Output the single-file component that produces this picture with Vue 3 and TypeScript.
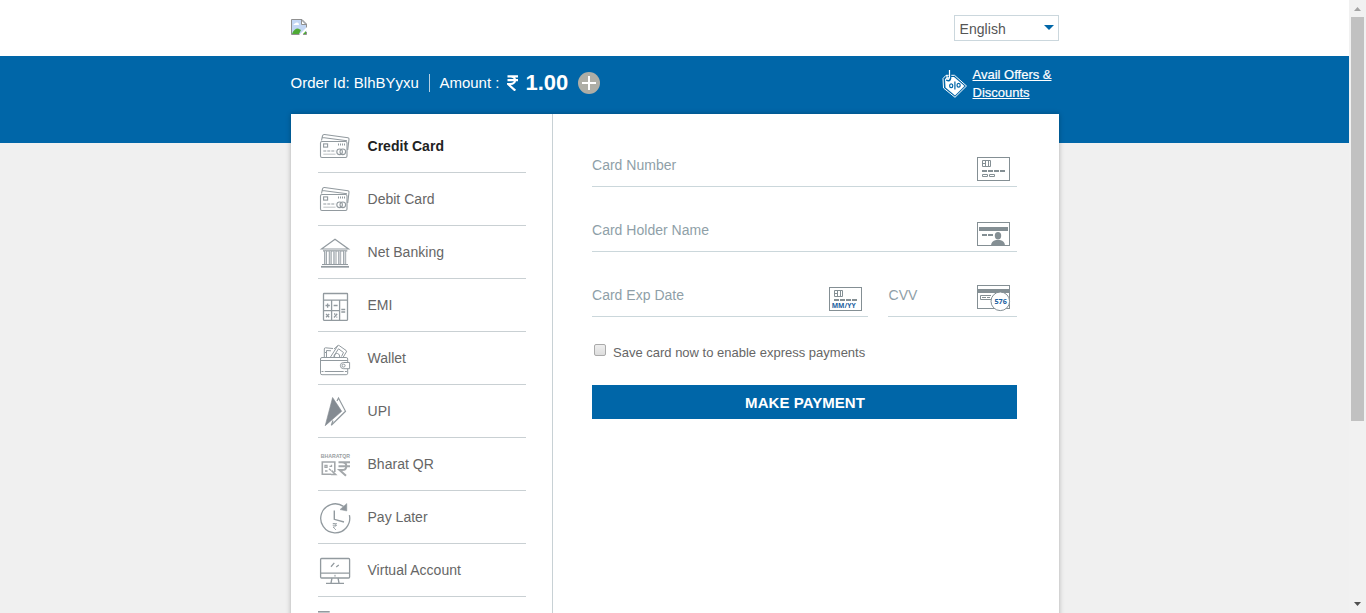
<script setup lang="ts">
import { ref } from 'vue'

interface Method {
  id: string
  label: string
}

const methods: Method[] = [
  { id: 'credit', label: 'Credit Card' },
  { id: 'debit', label: 'Debit Card' },
  { id: 'bank', label: 'Net Banking' },
  { id: 'emi', label: 'EMI' },
  { id: 'wallet', label: 'Wallet' },
  { id: 'upi', label: 'UPI' },
  { id: 'qr', label: 'Bharat QR' },
  { id: 'later', label: 'Pay Later' },
  { id: 'virtual', label: 'Virtual Account' },
  { id: 'more', label: '' },
]
const active = ref<string>('credit')
const saved = ref<boolean>(false)
</script>

<template>
  <div class="window">
    <div class="page">
      <header class="top">
        <div class="wrap top-row">
          <svg class="logo" width="16" height="16" viewBox="0 0 16 16">
            <path d="M.5 .5H11L15.5 5V15.5H.5Z" fill="#c3d7f5" />
            <path d="M1 15Q3 9.5 7 9.5L10 11 8 15Z" fill="#4faa35" />
            <path d="M2.5 6q0-1.5 1.5-1.5 1-1.5 2.5-1 1.5.3 1.5 2.5z" fill="#fff" />
            <path d="M.5 15.5V.5H11L15.5 5V9M.5 15.5H9M12 15.5H15.5V13" fill="none" stroke="#909090" />
            <path d="M10.5 1V5.5H15Z" fill="#fff" stroke="#909090" />
            <path d="M8 16L16 8V11L11.5 16Z" fill="#fff" />
            <path d="M12 15L15 12V15Z" fill="#4faa35" />
          </svg>
          <div class="lang">
            <span>English</span>
            <svg width="10" height="5" viewBox="0 0 10 5"><path d="M0 0H10L5 5Z" fill="#0066a8" /></svg>
          </div>
        </div>
      </header>

      <section class="band">
        <div class="wrap order">
          <span class="order-id">Order Id: BlhBYyxu</span>
          <span class="sep"></span>
          <span class="amount-label">Amount :</span>
          <svg class="rupee" width="12" height="16" viewBox="0 0 12 16">
            <path d="M.5 1.3H11M.5 5.2H11M1 1.3H3.5C9.5 1.3 9.5 9 3.5 9H1L8.3 15.6" fill="none" stroke="#fff" stroke-width="2.2" />
          </svg>
          <strong class="amount">1.00</strong>
          <svg class="plus" width="22" height="22" viewBox="0 0 22 22">
            <circle cx="11" cy="11" r="11" fill="#aeaea6" />
            <path d="M11 4V18M4 11H18" stroke="#fff" stroke-width="2" />
          </svg>
          <a class="offers">
            <svg width="26" height="30" viewBox="0 0 26 30">
              <path d="M1 9.5L4 6.3 12.5 6.3 24.5 17 13 28.3 1.5 19Z" fill="none" stroke="#fff" stroke-width="1" />
              <path d="M3 10L6 8 12 8 22.5 17 13 26.5 3.5 18.5Z" fill="#fff" />
              <path d="M4.5 10.5Q7.5 12.5 8 9.5V3" fill="none" stroke="#0066a8" stroke-width="2.6" />
              <path d="M7.5 1V8.5Q7 11 5 10V6" fill="none" stroke="#fff" stroke-width="1.2" />
              <g fill="none" stroke="#0066a8" stroke-width="1.2">
                <ellipse cx="9.2" cy="16.7" rx="1.6" ry="1.9" />
                <ellipse cx="16.6" cy="16.3" rx="1.6" ry="1.9" />
                <path d="M12.9 12.5V20.5" />
              </g>
            </svg>
            <span>Avail Offers &amp;<br />Discounts</span>
          </a>
        </div>
      </section>

      <main class="wrap card">
        <nav class="menu">
          <div
            v-for="m in methods"
            :key="m.id"
            class="item"
            :class="{ active: active === m.id }"
            @click="active = m.id"
          >
            <svg class="ico" width="34" height="52" viewBox="0 0 34 52">
              <g v-if="m.id === 'credit' || m.id === 'debit'" stroke-width="1.1">
                <path d="M3.5 20.5L4.5 15.8Q5 14.3 6.5 14.5L30 17.7Q31.2 18 31 19.3L29.7 30M4.5 17.5L29 20.8" />
                <rect x="2.5" y="21.5" width="26.5" height="16" rx="1.5" fill="#fff" />
                <rect x="5.6" y="23.9" width="4" height="3.2" />
                <path d="M20 24.5H27.3" stroke-width="2" stroke-dasharray="1 1" />
                <path d="M5.3 31H17.5" stroke-width="1.1" stroke-dasharray="3 1" />
                <path d="M5.3 34.2H17.5" opacity=".55" />
                <circle cx="21.6" cy="31.8" r="2.8" /><circle cx="24.8" cy="31.8" r="2.8" />
              </g>
              <g v-else-if="m.id === 'bank'">
                <path d="M3.5 23L17 13.3 30.5 23ZM5 24.8H29.3" stroke-width="1.2" />
                <path d="M7.5 25V38M12 25V38M16.5 25V38M21.3 25V38M26.5 25V38" stroke="#d5d8db" stroke-width="2.2" />
                <path d="M6.5 25V38M8.5 25V38M11.3 25V38M13.3 25V38M15.9 25V38M18.1 25V38M20.7 25V38M22.7 25V38M25.5 25V38M27.7 25V38" stroke-width=".8" />
                <path d="M4 38.5H30" />
                <path d="M3 40.8H31" stroke-width="1.7" />
              </g>
              <g v-else-if="m.id === 'emi'" stroke-width="1.3">
                <rect x="5.5" y="14.5" width="24" height="26.8" rx=".5" />
                <path d="M5.5 21.2H29.5M13.6 21.2V41.3M21.6 21.2V41.3M5.5 31.6H21.6" />
                <path d="M9.6 24.5V28.7M7.5 26.5H11.8M15.6 26.5H19.6M23.3 30.5H27.2M23.3 33H27.2M8 35L11.2 38.2M8 38.2L11.2 35M16 38.5L19.2 34.8M16 35H17.3M18.3 38.2H19.3" />
              </g>
              <g v-else-if="m.id === 'wallet'">
                <path d="M6.3 25V17Q6.3 15.8 7.5 15.8L15 16.5M8.5 25V18.5L13 18.8M7 21L9 19M12.5 25L19.7 13.8Q20.3 13 21.2 13.6L28 18.4Q29 19 28.3 20L25.3 25M15.5 24.5L20.5 16.8 25.5 20.5 23.5 24.5M16 17L20 13.5" />
                <path d="M16.5 25Q16.5 20.6 19.5 21.5 22 22 21.7 25" />
                <rect x="2.5" y="25.5" width="27.2" height="17.2" rx="1.5" />
                <path d="M2.8 28.5H29.5" />
                <path d="M3.5 39.5H29" stroke-dasharray="2 1.2 19 1.2" />
                <path d="M31.6 30.5H25.7Q22.4 30.5 22.4 33.6 22.4 36.7 25.7 36.7H31.6Z" fill="#fff" />
                <circle cx="25.6" cy="33.6" r="1.5" />
              </g>
              <g v-else-if="m.id === 'upi'">
                <path d="M19 16L20.5 13 27.5 26.3 13.3 40.3 15 35.5" stroke-width="1.2" />
                <path d="M14.6 12.5L23.7 26.3 7.2 40.7Z" fill="#848b92" stroke="#848b92" stroke-width=".6" />
              </g>
              <g v-else-if="m.id === 'qr'" class="soft">
                <text x="2.8" y="20.4" textLength="29.2" lengthAdjust="spacingAndGlyphs">BHARATQR</text>
                <path d="M16.8 34V24H4.3V36.2H13" stroke-width="1.6" />
                <path d="M7 27.3H9V29.3H7ZM11.5 28.3H13.5V26.8M7 33H9.5M11 30.8L13 32.5" stroke-width="1.3" />
                <path d="M13 36.5H17.5L13.5 32.5" stroke-width="1.7" />
                <path d="M20.5 24.3H32M20.5 28.3H32M21 24.3H24C29.8 24.3 29.8 32 24 32H21.5L28 37.8" stroke-width="2" />
              </g>
              <g v-else-if="m.id === 'later'">
                <path d="M31.4 24.2A14.5 14.5 0 1 1 25.5 15.4" stroke-width="1.3" />
                <path d="M22 18.6L28.8 12.5V20Z" fill="#8f969c" stroke-width=".5" />
                <path d="M16.3 19.5V28.3L26 31" stroke-width="1.4" />
                <path d="M14.7 32.6H19M14.7 34.3H19M15 32.6H16C18.4 32.6 18.4 36 16 36H15L18 39" stroke-width=".8" />
              </g>
              <g v-else-if="m.id === 'virtual'" stroke-width="1.3">
                <rect x="2.6" y="14.5" width="29" height="19.5" rx="1" />
                <path d="M2.6 29.2H31.6M13 22.7L16.3 18.9M18.2 23L20.8 21M14 34L13 39M20 34L21 39M8 39.3H26" />
                <circle cx="17" cy="31.7" r=".2" />
              </g>
              <path v-else d="M0 14.8H11.7" stroke-width="1.6" />
            </svg>
            <span>{{ m.label }}</span>
          </div>
        </nav>

        <form class="form" @submit.prevent>
          <div class="field">
            <span>Card Number</span>
            <svg class="fico" width="33" height="25" viewBox="0 0 33 25">
              <rect x=".5" y=".5" width="32" height="23" />
              <path d="M5.5 3.5H13.5V9.5H5.5ZM8.5 3.5V9.5M11.5 3.5V9.5M5.5 6.5H8.5" />
              <path d="M5 14H28" stroke-width="2" stroke-dasharray="5 1" />
              <path d="M5.5 17.5H10.5V19.5H5.5ZM12.5 17.5H17.5V19.5H12.5Z" />
            </svg>
          </div>
          <div class="field">
            <span>Card Holder Name</span>
            <svg class="fico" width="33" height="25" viewBox="0 0 33 25">
              <rect x=".5" y=".5" width="32" height="23" />
              <path d="M2 7H31" stroke-width="4" />
              <path d="M5 13H16" stroke-width="2" stroke-dasharray="5 1" />
              <path d="M14 24Q14 19 19 18H23Q28 19 28 24Z" fill="#848f94" stroke="none" />
              <ellipse cx="21" cy="13.7" rx="3.2" ry="3.7" fill="#848f94" stroke="none" />
            </svg>
          </div>
          <div class="pair">
            <div class="field exp">
              <span>Card Exp Date</span>
              <svg class="fico" width="33" height="25" viewBox="0 0 33 25">
                <rect x=".5" y=".5" width="32" height="23" />
                <path d="M5.5 3.5H13.5V9.5H5.5ZM8.5 3.5V9.5M11.5 3.5V9.5M5.5 6.5H8.5" />
                <path d="M5 13H28" stroke-width="2" stroke-dasharray="5 1" />
                <text x="2.7" y="21.4" font-size="7.6" textLength="24" lengthAdjust="spacingAndGlyphs">MM/YY</text>
              </svg>
            </div>
            <div class="field cvv">
              <span>CVV</span>
              <svg class="fico" width="33" height="27" viewBox="0 0 33 27">
                <rect x=".5" y=".5" width="32" height="23" />
                <path d="M0 6H33" stroke-width="4" />
                <path d="M14 10.5H3.5V14.5H14" />
                <path d="M5 12.5H13" stroke-dasharray="4 1" />
                <circle cx="23.3" cy="16.3" r="9.3" fill="#fff" />
                <text x="17.4" y="18.8" font-size="7.4" textLength="12.4" lengthAdjust="spacingAndGlyphs">576</text>
              </svg>
            </div>
          </div>
          <div class="save" @click="saved = !saved">
            <i class="box"></i>
            <span>Save card now to enable express payments</span>
          </div>
          <button class="pay" type="submit">MAKE PAYMENT</button>
        </form>
      </main>
    </div>

    <aside class="bar">
      <svg width="17" height="17" viewBox="0 0 17 17"><path d="M5 11H12L8.5 7Z" fill="#a3a3a3" /></svg>
      <div class="thumb"></div>
      <svg class="down" width="17" height="17" viewBox="0 0 17 17"><path d="M5 6H12L8.5 10Z" fill="#505050" /></svg>
    </aside>
  </div>
</template>

<style>
html,
body {
  margin: 0;
  overflow: hidden;
}
</style>

<style scoped>
.window {
  display: flex;
  width: 1366px;
  height: 613px;
  overflow: hidden;
  font-family: "Liberation Sans", Arial, sans-serif;
  font-size: 14px;
  color: #666;
}
.window * {
  box-sizing: border-box;
}
svg {
  display: block;
  flex: none;
}
span,
strong {
  white-space: nowrap;
}
.page {
  width: 1349px;
  height: 613px;
  overflow: hidden;
  background: #f0f0f0;
}
.wrap {
  width: 768px;
  margin-left: 291px;
}
.top {
  height: 56px;
  background: #fff;
}
.top-row {
  display: flex;
  justify-content: space-between;
  padding-top: 15px;
}
.logo {
  margin-top: 4px;
}
.lang {
  display: flex;
  align-items: center;
  justify-content: space-between;
  width: 105px;
  height: 26px;
  padding: 0 5px 0 4.5px;
  border: 1px solid #cbd7dd;
  font-size: 14px;
  letter-spacing: 0.05px;
  color: #555;
}
.lang span {
  padding-top: 2px;
}
.lang svg {
  margin-top: -2px;
  margin-right: -1px;
}
.band {
  height: 87px;
  background: #0066a8;
}
.order {
  display: flex;
  align-items: center;
  height: 54px;
  color: #fff;
  font-size: 15px;
}
.order-id {
  margin: -2px 0 0 -0.5px;
}
.amount-label {
  margin: -2px 0 0 -0.5px;
}
.sep {
  width: 1px;
  height: 18px;
  margin: 0 10px;
  background: #b5d0e3;
}
.rupee {
  margin-left: 8px;
}
.amount {
  margin-left: 6px;
  font-size: 22px;
}
.plus {
  margin-left: 10px;
}
.offers {
  display: flex;
  align-items: center;
  width: 118px;
  margin-left: auto;
  padding-top: 2px;
  font-size: 13px;
  line-height: 18px;
  text-decoration: underline;
}
.offers span {
  -webkit-text-stroke: 0.2px #fff;
}
.offers svg {
  margin-left: 1px;
  margin-right: 4.5px;
}
.card {
  display: flex;
  position: relative;
  height: 520px;
  margin-top: -29px;
  background: #fff;
  box-shadow: 0 0 5px rgba(0, 0, 0, 0.28);
}
.menu {
  width: 262px;
  padding: 6px 26px 0 27px;
  border-right: 1px solid #c8d1d5;
}
.item {
  display: flex;
  align-items: center;
  height: 53px;
  border-bottom: 1px solid #c9d0d3;
}
.item span {
  margin-left: 15.5px;
  font-size: 14px;
  letter-spacing: 0.02px;
}
.item.active span {
  font-weight: bold;
  color: #222;
}
.ico {
  fill: none;
  stroke: #929a9f;
}
.soft {
  stroke: #a3a7aa;
}
.ico text {
  fill: #999ea2;
  stroke: none;
  font-size: 5.2px;
  font-weight: bold;
}
.form {
  width: 425px;
  margin: 22px 0 0 39px;
}
.field {
  display: flex;
  justify-content: space-between;
  height: 51px;
  margin-bottom: 14px;
  padding: 20px 7px 0 0;
  border-bottom: 1px solid #cbd7db;
  color: #8f9fa8;
}
.field span {
  line-height: 18px;
  letter-spacing: 0.02px;
}
.fico {
  margin-top: 1px;
  fill: none;
  stroke: #848f94;
  overflow: visible;
}
.fico text {
  fill: #2060a0;
  stroke: none;
  font-family: "Open Sans", sans-serif;
  font-weight: bold;
}
.pair {
  display: flex;
  gap: 20px;
}
.exp {
  width: 276px;
  padding-right: 6px;
}
.cvv {
  width: 129px;
}
.cvv span {
  padding-left: 0.5px;
}
.cvv .fico {
  margin-top: -1px;
}
.save {
  display: flex;
  height: 16px;
  margin: 13px 0 25px 2px;
  font-size: 13px;
  line-height: 17px;
}
.box {
  width: 12px;
  height: 12px;
  margin-right: 7px;
  border: 1px solid #aaa;
  border-radius: 2px;
  background: linear-gradient(#eee, #ddd);
}
.pay {
  display: block;
  width: 425px;
  height: 34px;
  padding: 0 0 0 1px;
  border: 0;
  background: #0066a8;
  color: #fff;
  font: bold 15px "Liberation Sans", Arial, sans-serif;
  letter-spacing: 0.05px;
}
.bar {
  display: flex;
  flex-direction: column;
  width: 17px;
  background: #f1f1f1;
}
.thumb {
  width: 13px;
  height: 404px;
  margin-left: 2px;
  background: #c1c1c1;
}
.down {
  margin-top: auto;
}
</style>
